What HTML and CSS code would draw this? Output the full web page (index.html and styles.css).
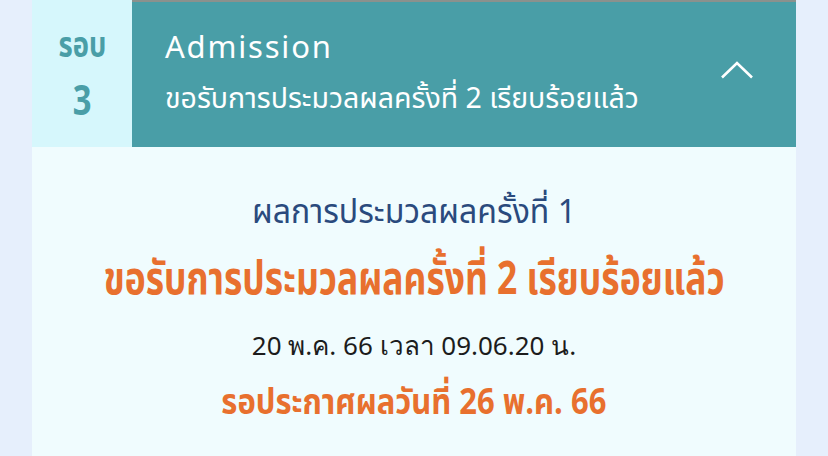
FILE: index.html
```html
<!DOCTYPE html>
<html lang="th">
<head>
<meta charset="utf-8">
<link rel="stylesheet" href="styles.css">
</head>
<body>
<div class="card">
  <div class="head">
    <div class="round">
      <div class="round-label"><span class="sq">รอบ</span></div>
      <div class="round-num"><span class="sq">3</span></div>
    </div>
    <div class="title-box">
      <div class="titles">
        <div class="title">Admission</div>
        <div class="subtitle">ขอรับการประมวลผลครั้งที่ 2 เรียบร้อยแล้ว</div>
      </div>
      <svg class="chev" width="34" height="20" viewBox="0 0 34 20"><path d="M2 17.5 L17 3 L32 17.5" fill="none" stroke="#fff" stroke-width="2.6"/></svg>
    </div>
  </div>
  <div class="body">
    <div class="l1"><span class="sq">ผลการประมวลผลครั้งที่ 1</span></div>
    <div class="l2"><span class="sq">ขอรับการประมวลผลครั้งที่ 2 เรียบร้อยแล้ว</span></div>
    <div class="l3">20 พ.ค. 66 เวลา 09.06.20 น.</div>
    <div class="l4"><span class="sq">รอประกาศผลวันที่ 26 พ.ค. 66</span></div>
  </div>
</div>
</body>
</html>
```
FILE: styles.css
```css
html, body { margin: 0; padding: 0; }
body {
  background: #e6effc;
  width: 828px; height: 456px; overflow: hidden;
  font-family: "Noto Sans Thai", "Noto Sans", sans-serif;
}
.sq { display: inline-block; white-space: nowrap; transform-origin: 50% 50%; }
.card {
  margin-left: 32px;
  width: 764px;
  height: 456px;
  background: #f0fcfe;
  display: flex; flex-direction: column;
}
.head { display: flex; height: 147px; flex: none; }
.round {
  width: 100px; background: #d6f7fc;
  display: flex; flex-direction: column; align-items: center;
  color: #4a9ea7; font-weight: 700;
}
.round-label { font-size: 36px; line-height: 36px; margin-top: 28px; }
.round-label .sq { transform: scaleX(0.76); }
.round-num { font-size: 42px; line-height: 44px; margin-top: 16px; }
.round-num .sq { transform: scaleX(0.78); }
.title-box {
  flex: 1; background: #499ea7; border-top: 2px solid #8b918d;
  display: flex; align-items: center; justify-content: space-between;
  padding: 0 42px 0 33px; color: #fff;
}
.title { font-size: 31px; line-height: 44px; letter-spacing: 1.8px; }
.subtitle { font-size: 28.5px; line-height: 44px; margin-top: 7px; }
.chev { margin-top: -10px; }
.body { display: flex; flex-direction: column; align-items: center; padding-top: 44px; }
.l1 { color: #2a4a7d; font-size: 33px; line-height: 44px; }
.l1 .sq { transform: scaleX(0.97); }
.l2 { color: #e8702e; font-size: 46px; font-weight: 700; line-height: 56px; margin-top: 17px; }
.l2 .sq { transform: scaleX(0.77); }
.l3 { color: #1c1c1c; font-size: 26px; line-height: 36px; margin-top: 19px; font-family: "Noto Sans", sans-serif; white-space: nowrap; }
.l4 { color: #e8702e; font-size: 36px; font-weight: 700; line-height: 48px; margin-top: 16px; }
.l4 .sq { transform: scaleX(0.86); }
```
